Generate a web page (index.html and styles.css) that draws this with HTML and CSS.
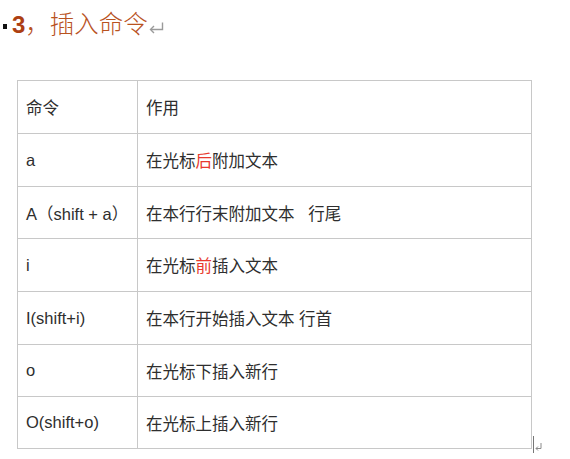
FILE: index.html
```html
<!DOCTYPE html>
<html lang="zh-CN">
<head>
<meta charset="utf-8">
<title>插入命令</title>
<link rel="stylesheet" href="styles.css">
</head>
<body>
<div class="page">
  <h2 class="heading">
    <span class="bullet"></span>
    <span class="num">3</span><span class="htext">，插入命令</span>
    <svg class="ret" width="15" height="12" viewBox="0 0 15 12"><path d="M13.5 0.5 V7.5 H2" fill="none" stroke="#9a9a9a" stroke-width="1.4"/><path d="M5 4 L1.5 7.5 L5 11" fill="none" stroke="#9a9a9a" stroke-width="1.4"/></svg>
  </h2>
  <div class="tablewrap">
    <table class="cmds">
      <tbody>
        <tr class="r53"><td class="c1">命令</td><td class="c2">作用</td></tr>
        <tr class="r53"><td class="c1">a</td><td class="c2">在光标<span class="red">后</span>附加文本</td></tr>
        <tr class="r52"><td class="c1">A（shift + a）</td><td class="c2">在本行行末附加文本&nbsp;&nbsp;&nbsp;行尾</td></tr>
        <tr class="r53"><td class="c1">i</td><td class="c2">在光标<span class="red">前</span>插入文本</td></tr>
        <tr class="r53"><td class="c1">I(shift+i)</td><td class="c2">在本行开始插入文本 行首</td></tr>
        <tr class="r52"><td class="c1">o</td><td class="c2">在光标下插入新行</td></tr>
        <tr class="r52"><td class="c1">O(shift+o)</td><td class="c2">在光标上插入新行</td></tr>
      </tbody>
    </table>
    <div class="endmark">
      <span class="caret"></span>
      <svg class="ret2" width="7" height="8" viewBox="0 0 7 8"><path d="M6 0 V5.5 H1" fill="none" stroke="#8a8a8a" stroke-width="1"/><path d="M3 3.5 L1 5.5 L3 7.5" fill="none" stroke="#8a8a8a" stroke-width="1"/></svg>
    </div>
  </div>
</div>
</body>
</html>
```

FILE: styles.css
```css
html, body {
  margin: 0;
  padding: 0;
  background: #ffffff;
}
.page {
  width: 570px;
  height: 459px;
  overflow: hidden;
  font-family: "Liberation Sans", "Noto Sans CJK SC", sans-serif;
}
.heading {
  margin: 0;
  padding: 8px 0 0 3px;
  height: 36px;
  display: flex;
  align-items: baseline;
  font-weight: normal;
  font-size: 24px;
  line-height: 30px;
  color: #b54b1e;
}
.bullet {
  display: inline-block;
  width: 4px;
  height: 5px;
  background: #111;
  margin-right: 5px;
  align-self: center;
}
.num {
  font-family: "Liberation Sans", sans-serif;
  font-weight: bold;
  color: #ad3f12;
}
.htext {
  font-family: "Noto Sans CJK SC", sans-serif;
  font-weight: 300;
  font-size: 24.5px;
  color: #b9531f;
}
.ret {
  margin-left: 1px;
  align-self: center;
  position: relative;
  top: 2px;
}
.tablewrap {
  display: flex;
  align-items: flex-end;
  padding-left: 17px;
  margin-top: 36px;
}
.cmds {
  border-collapse: separate;
  border-spacing: 0;
  table-layout: fixed;
  width: 515px;
  border-left: 1px solid #c8c8c8;
  border-top: 1px solid #c8c8c8;
  font-size: 16.5px;
  color: #2e2e2e;
}
.cmds td {
  border-right: 1px solid #c8c8c8;
  border-bottom: 1px solid #c8c8c8;
  padding: 0 0 0 8px;
  vertical-align: middle;
  box-sizing: border-box;
  white-space: nowrap;
  font-family: "Liberation Sans", "Noto Sans CJK SC", sans-serif;
}
.cmds .c1 {
  width: 120px;
}
.cmds .c2 {
  width: 394px;
}
.r53 td { height: 53px; }
.r52 td { height: 52px; }
.red {
  color: #e8392e;
}
.endmark {
  display: flex;
  align-items: flex-end;
  margin-left: 1px;
  margin-bottom: -4px;
}
.caret {
  display: block;
  width: 1px;
  height: 17px;
  background: #777;
}
.ret2 {
  margin-left: 1px;
  margin-bottom: 2px;
}
```
